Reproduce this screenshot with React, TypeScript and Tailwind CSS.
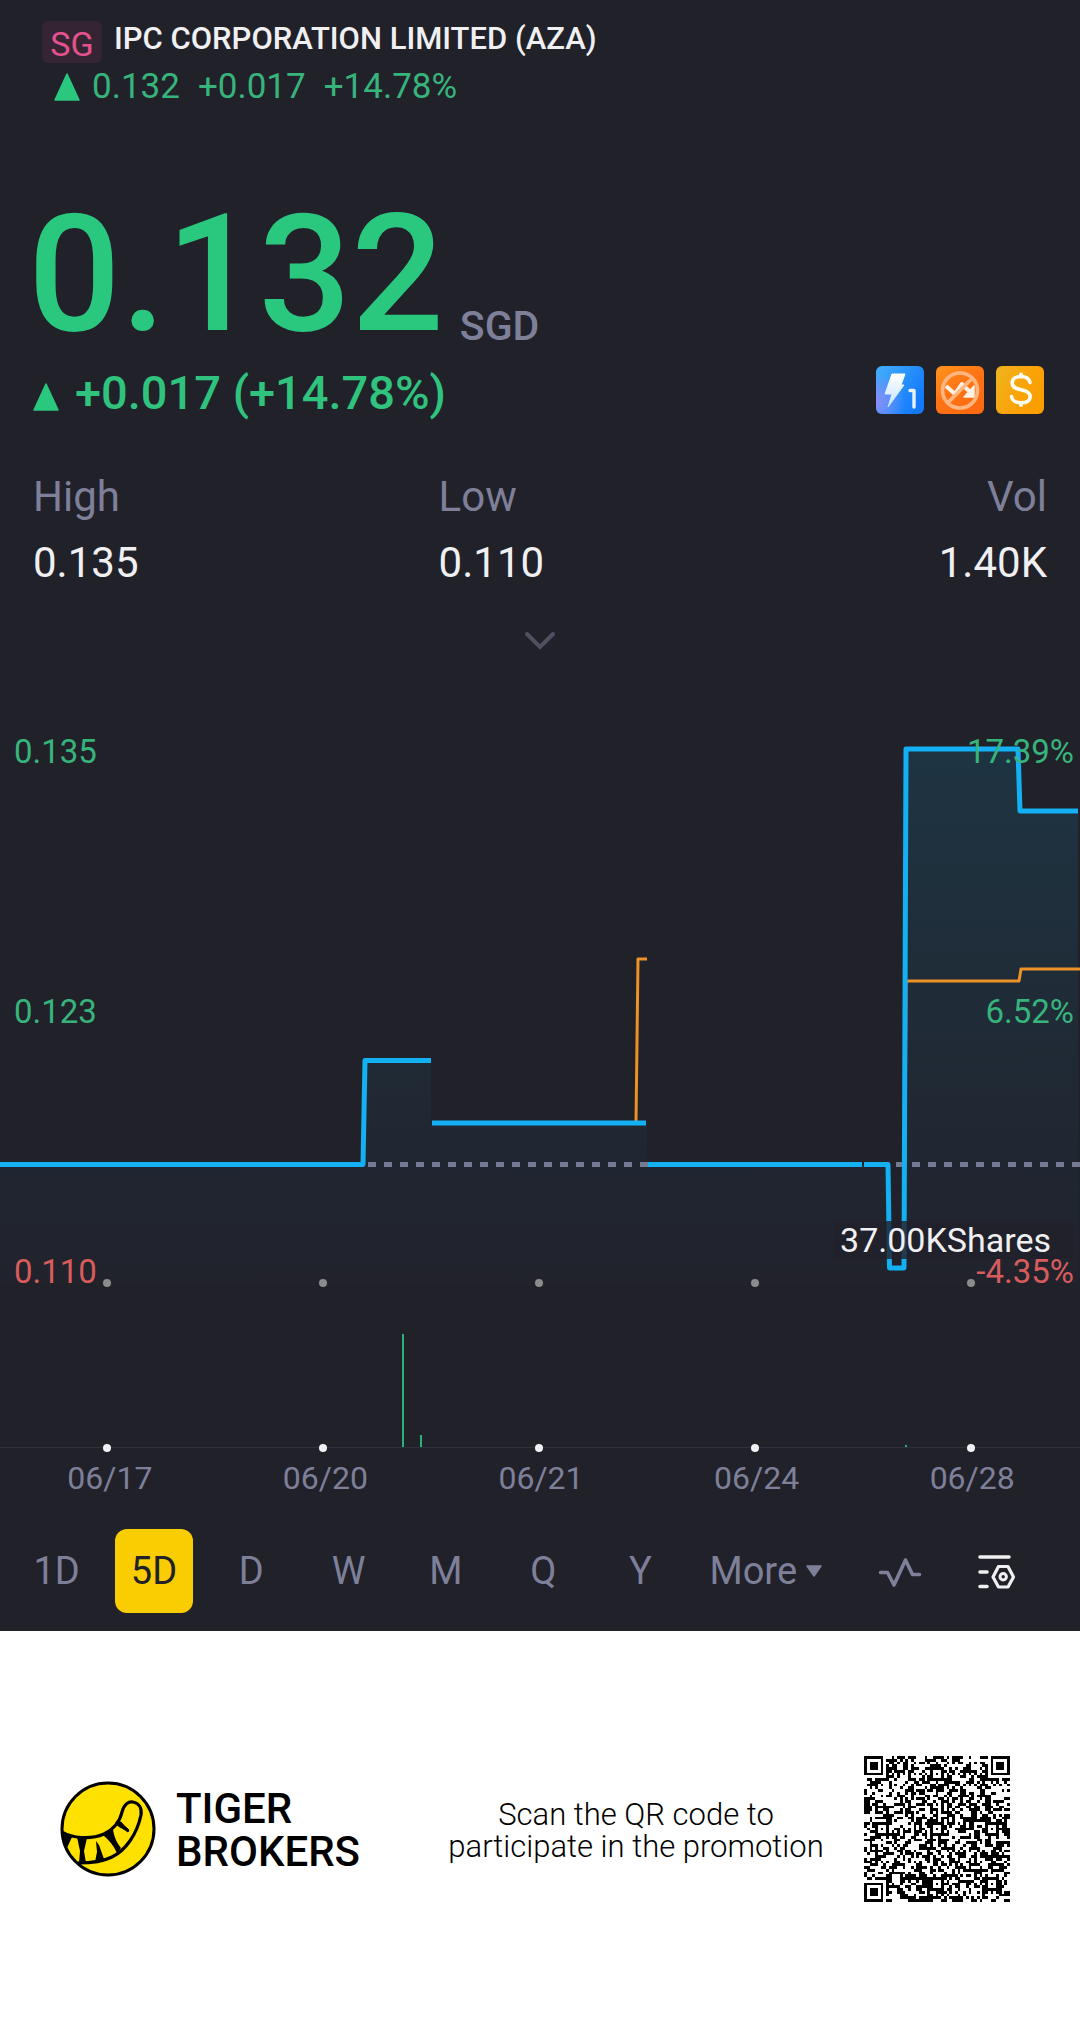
import React, { useState } from 'react';

const PERIODS = ['1D', '5D', 'D', 'W', 'M', 'Q', 'Y'];
const DATES = ['06/17', '06/20', '06/21', '06/24', '06/28'];
const DOTS = [107, 323, 539, 755, 971];

const STATS = [
    { label: 'High', value: '0.135', align: 'text-left' },
    { label: 'Low', value: '0.110', align: 'text-left' },
    { label: 'Vol', value: '1.40K', align: 'text-right' },
];

const UpTriangle: React.FC = () => (
    <svg viewBox="0 0 26 28" className="w-[26px] h-7 shrink-0" aria-hidden="true">
        <path d="M13 1 L25 27 H1 Z" fill="#2ac77f" stroke="#2ac77f" strokeWidth="1.5" strokeLinejoin="round" />
    </svg>
);

const QuoteLevelIcon: React.FC = () => (
    <svg viewBox="0 0 48 48" className="w-12 h-12" role="img" aria-label="Level 1 quotes">
        <defs>
            <linearGradient id="levelBg" x1="0" y1="0" x2="1" y2="0.6">
                <stop offset="0" stopColor="#45b0fb" />
                <stop offset="1" stopColor="#1279fb" />
            </linearGradient>
            <radialGradient id="levelGlow" cx="0" cy="0.75" r="0.6">
                <stop offset="0" stopColor="#8c8cf8" />
                <stop offset="1" stopColor="#8c8cf8" stopOpacity="0" />
            </radialGradient>
            <linearGradient id="boltFill" x1="0" y1="0" x2="0" y2="1">
                <stop offset="0" stopColor="#ffffff" />
                <stop offset="1" stopColor="#c3e2ff" />
            </linearGradient>
        </defs>
        <rect width="48" height="48" rx="6" fill="url(#levelBg)" />
        <rect width="48" height="48" rx="6" fill="url(#levelGlow)" />
        <path d="M16 8 H29 L25 19 H28 L12 41 L16 28 H9 Z" fill="url(#boltFill)" stroke="url(#boltFill)" strokeWidth="1" strokeLinejoin="round" />
        <path d="M34 24.5 H38 V41" fill="none" stroke="#e6f2ff" strokeWidth="3.4" strokeLinecap="round" strokeLinejoin="round" />
    </svg>
);

const NoShortIcon: React.FC = () => (
    <svg viewBox="0 0 48 48" className="w-12 h-12" role="img" aria-label="Short selling unavailable">
        <defs>
            <linearGradient id="shortBg" x1="0" y1="0" x2="0.7" y2="1">
                <stop offset="0" stopColor="#ff961c" />
                <stop offset="0.5" stopColor="#ff7414" />
                <stop offset="1" stopColor="#ff6a10" />
            </linearGradient>
        </defs>
        <rect width="48" height="48" rx="6" fill="url(#shortBg)" />
        <path d="M10 20 L19 28 L26 18 L34 26" fill="none" stroke="#fff1e4" strokeWidth="4" strokeLinejoin="round" />
        <path d="M38 20 V31 H28 Z" fill="#fff1e4" stroke="#fff1e4" strokeWidth="1.5" strokeLinejoin="round" />
        <circle cx="24" cy="24.5" r="17.5" fill="none" stroke="#ffb681" strokeWidth="3.6" />
        <path d="M12 36.5 L36 12.5" stroke="#ffb681" strokeWidth="3.6" />
    </svg>
);

const DollarIcon: React.FC = () => (
    <svg viewBox="0 0 48 48" className="w-12 h-12" role="img" aria-label="Financing">
        <defs>
            <linearGradient id="dollarBg" x1="0" y1="0" x2="1" y2="0.5">
                <stop offset="0" stopColor="#eeb620" />
                <stop offset="0.5" stopColor="#f8a60c" />
                <stop offset="1" stopColor="#fb9e02" />
            </linearGradient>
        </defs>
        <rect width="48" height="48" rx="6" fill="url(#dollarBg)" />
        <path
            d="M34 16.5 C33 12.5 29.5 10.5 25 10.5 C19.5 10.5 16.2 13 16.2 17 C16.2 21.5 20 22.7 25 23.7 C30.5 24.8 34.2 26.5 34.2 30.5 C34.2 34.5 30.5 36.8 25 36.8 C19.5 36.8 16 34.2 15.5 30.5"
            fill="none"
            stroke="#fffdf2"
            strokeWidth="3.6"
            strokeLinecap="round"
        />
        <path d="M25 8.5 V10.5 M25 37 V39" stroke="#fffdf2" strokeWidth="4" strokeLinecap="round" />
    </svg>
);

const PulseIcon: React.FC = () => (
    <svg viewBox="0 0 44 32" className="w-11 h-8" aria-hidden="true">
        <path d="M2.5 16.5 H9.5 L16 29 L27.5 4 L34.5 18.5 H41.5" fill="none" stroke="#7e8099" strokeWidth="3.6" strokeLinecap="round" strokeLinejoin="round" />
    </svg>
);

const ChartSettingsIcon: React.FC = () => (
    <svg viewBox="0 0 40 36" className="w-10 h-9" fill="none" stroke="#f0f0f2" strokeWidth="3.6" strokeLinecap="round" strokeLinejoin="round" aria-hidden="true">
        <path d="M3 3 H32 M3 18 H10 M3 32.5 H10" />
        <path d="M21.5 12.5 H31 L36.5 23 L31 33 H21.5 L16 23 Z" strokeWidth="3.2" />
        <circle cx="26.2" cy="22.8" r="3.2" strokeWidth="3" />
    </svg>
);

const TigerLogo: React.FC = () => (
    <svg viewBox="0 0 96 96" className="w-24 h-24 shrink-0" role="img" aria-label="Tiger Brokers logo">
        <circle cx="48" cy="48" r="46" fill="#ffe100" />
        <path
            d="M2 51 C12 57 30 59 44 53 C54 48 60 40 62 31 C64 23 69 20 73 21 C79 22 82 27 81 34 C77 53 66 69 52 76 C42 81 28 82 18 82"
            fill="none"
            stroke="#000"
            strokeWidth="3.2"
        />
        <path d="M1 50 L12 56 L7 67 Z" />
        <path d="M17 56 L27 57 L24 70 L26 82 L19 82 L20 70 Z" />
        <path d="M36 60 L39 64 L44 78 L35 81 L37 71 Z" />
        <path d="M43 54 L53 48 C54 56 57 62 61 67 L57 72 C54 65 49 59 43 54 Z" />
        <path d="M56 41 L61 41 C63 44 66 46 69 49 L68 51 C64 48 61 47 57 44 Z" stroke="#000" strokeWidth="1" />
        <circle cx="48" cy="48" r="46" fill="none" stroke="#000" strokeWidth="3" />
    </svg>
);

const QR_SIZE = 53;
const QR_ALIGN = [6, 26, 46];

// fixed seed so that the code looks the same on every render
const buildQrPath = () => {
    let seed = 20240628;
    const next = () => {
        seed = (seed * 1103515245 + 12345) % 2147483648;
        return seed / 2147483648;
    };
    const finderCell = (r: number, c: number) => {
        if (r < -1 || c < -1 || r > 7 || c > 7) return null;
        const d = Math.max(Math.abs(r - 3), Math.abs(c - 3));
        return d === 3 || d <= 1;
    };
    const cell = (r: number, c: number) => {
        const noise = next() > 0.5;
        const corner = finderCell(r, c) ?? finderCell(r, c - (QR_SIZE - 7)) ?? finderCell(r - (QR_SIZE - 7), c);
        if (corner !== null) return corner;
        for (const ar of QR_ALIGN) {
            for (const ac of QR_ALIGN) {
                const d = Math.max(Math.abs(r - ar), Math.abs(c - ac));
                if (d <= 2) return d !== 1;
            }
        }
        if (r === 6 || c === 6) return (r + c) % 2 === 0;
        return noise;
    };
    let d = '';
    for (let r = 0; r < QR_SIZE; r++) {
        for (let c = 0; c < QR_SIZE; c++) {
            if (cell(r, c)) d += `M${c} ${r}h1v1h-1z`;
        }
    }
    return d;
};

const QrCode: React.FC = () => (
    <svg viewBox="0 0 53 53" className="w-[146px] h-[146px] shrink-0" shapeRendering="crispEdges" role="img" aria-label="QR code">
        <path d={buildQrPath()} fill="#000" />
    </svg>
);

const PriceChart: React.FC = () => (
    <div className="relative">
        <svg viewBox="0 0 1080 766" preserveAspectRatio="none" className="block w-full h-[766px]" role="img" aria-label="5 day price and volume">
            <defs>
                <linearGradient id="area" gradientUnits="userSpaceOnUse" x1="0" y1="58" x2="0" y2="592">
                    <stop offset="0" stopColor="#0cb4e4" stopOpacity="0.13" />
                    <stop offset="1" stopColor="#0cb4e4" stopOpacity="0.01" />
                </linearGradient>
            </defs>
            <path
                d="M0 473 H363 L365 369 H431 V432 H647 V473 H888 L889 577 H904 L906 58 H1018 L1020 120 H1078 V592 H0 Z"
                fill="url(#area)"
            />
            <path d="M0 473.5 H1080" stroke="#757a93" strokeWidth="5" strokeDasharray="8 8" />
            <g fill="none" stroke="#ec9226" strokeWidth="3" strokeLinejoin="round">
                <path d="M636 432 L638 268 H647" />
                <path d="M905 473 L906 290 H1019 L1021 278 H1080" />
            </g>
            <g fill="none" stroke="#14b0f4" strokeWidth="5" strokeLinejoin="round">
                <path d="M0 473.5 H363 L365 369.5 H431" />
                <path d="M432 432 H646" />
                <path d="M648 473.5 H862" />
                <path d="M864 473.5 H888 L889.5 577 H904 L906 58 H1018 L1020 120 H1078" />
            </g>
            {DOTS.map(x => <circle key={x} cx={x} cy="592" r="4" fill="#8c8c8c" />)}
            <path d="M0 756.5 H1080" stroke="#2f303b" strokeWidth="1" />
            <g fill="#2fb079">
                <rect x="402" y="643" width="2" height="113" />
                <rect x="420" y="744" width="2" height="12" />
                <rect x="905" y="754" width="2" height="2" />
            </g>
            {DOTS.map(x => <circle key={x} cx={x} cy="757" r="4" fill="#f0f0f2" />)}
        </svg>

        {/* axis labels over the plot */}
        <div className="absolute inset-x-0 top-[41px] pl-[14px] pr-[6px] flex justify-between text-[33px] leading-[40px] text-[#37b47c]">
            <span>0.135</span><span>17.39%</span>
        </div>
        <div className="absolute inset-x-0 top-[301px] pl-[14px] pr-[6px] flex justify-between text-[33px] leading-[40px] text-[#37b47c]">
            <span>0.123</span><span>6.52%</span>
        </div>
        <div className="absolute right-[7px] top-[530px] pl-[6px] pr-[22px] bg-[#20212a]/80 text-[34px] leading-[38px] text-[#f0f0f2]">37.00KShares</div>
        <div className="absolute inset-x-0 top-[561px] pl-[14px] pr-[6px] flex justify-between text-[33px] leading-[40px] text-[#d85c5c]">
            <span>0.110</span><span>-4.35%</span>
        </div>
    </div>
);

const App: React.FC = () => {
    const [period, setPeriod] = useState('5D');

    return (
        <div className="min-h-screen bg-white font-['Roboto',sans-serif]">
            <main className="bg-[#21212a] pb-[18px]">
                <header className="pt-[21px] pl-[42px]">
                    <div className="flex items-start gap-3">
                        <span className="w-[60px] h-[42px] rounded-md bg-[#352533] text-[#e3528f] text-[34px] leading-[46px] text-center">SG</span>
                        <h1 className="text-[31px] leading-9 font-medium text-[#f0f0f2]">IPC CORPORATION LIMITED (AZA)</h1>
                    </div>
                    <div className="flex items-center pl-3 h-12 text-[35px] text-[#37b47c]">
                        <UpTriangle />
                        <span className="ml-3">0.132</span>
                        <span className="ml-[18px]">+0.017</span>
                        <span className="ml-[18px]">+14.78%</span>
                    </div>
                </header>

                <div className="px-7 pt-[79px] flex items-end gap-4 text-[#2ac77f]">
                    <span className="text-[163px] leading-[170px] font-medium">0.132</span>
                    <span className="text-[41px] leading-[48px] pb-[10px] text-[#7e8099] font-medium">SGD</span>
                </div>
                <section className="px-[33px]">
                    <div className="flex items-end h-[54px]">
                        <div className="flex items-end h-[42px]">
                            <div className="pb-[3px]"><UpTriangle /></div>
                            <span className="ml-4 text-[47px] leading-[42px] font-medium text-[#2fc37e]">+0.017 (+14.78%)</span>
                        </div>
                        <div className="ml-auto mr-[3px] flex gap-3">
                            <QuoteLevelIcon />
                            <NoShortIcon />
                            <DollarIcon />
                        </div>
                    </div>
                    <dl className="mt-[55px] grid grid-cols-[40%_1fr_auto] text-[42px] leading-[56px]">
                        {STATS.map(s => (
                            <div key={s.label} className={s.align}>
                                <dt className="text-[#7e8099]">{s.label}</dt>
                                <dd className="mt-[10px] text-[#f0f0f2]">{s.value}</dd>
                            </div>
                        ))}
                    </dl>
                    <button type="button" aria-label="Show more" className="flex w-full h-[100px] items-center justify-center">
                        <svg viewBox="0 0 32 20" className="w-8 h-5" aria-hidden="true">
                            <path d="M3 3 L16 16 L29 3" fill="none" stroke="#4f5160" strokeWidth="4" strokeLinecap="round" />
                        </svg>
                    </button>
                </section>

                <PriceChart />
                <div className="grid grid-cols-5 pl-[2px] text-center text-[32px] leading-[42px] text-[#7e8099]">
                    {DATES.map(d => <span key={d}>{d}</span>)}
                </div>

                <nav className="mt-[30px] pl-2 pr-[34px] grid grid-cols-[repeat(7,9fr)_15fr_9fr_9fr] items-center text-[38px] text-[#7e8099]">
                    {PERIODS.map(p => (
                        <button
                            key={p}
                            type="button"
                            onClick={() => setPeriod(p)}
                            className={`justify-self-center w-[78px] h-[84px] rounded-xl ${period === p ? 'bg-[#f9cd02] text-[#21212a]' : ''}`}
                        >
                            {p}
                        </button>
                    ))}
                    <button type="button" className="flex items-center justify-center gap-2 pr-2">
                        More
                        <svg viewBox="0 0 18 12" className="w-[18px] h-3" aria-hidden="true">
                            <path d="M2 1 H16 L9 11 Z" fill="#7e8099" stroke="#7e8099" strokeWidth="1.5" strokeLinejoin="round" />
                        </svg>
                    </button>
                    <button type="button" aria-label="Indicators" className="flex justify-center pt-[2px]"><PulseIcon /></button>
                    <button type="button" aria-label="Chart settings" className="flex justify-center pt-[2px]"><ChartSettingsIcon /></button>
                </nav>
            </main>

            <footer className="flex items-center pl-[60px] pr-[70px] py-[125px] text-black">
                <TigerLogo />
                <p className="ml-[20px] pt-[2px] text-[42px] leading-[43px] font-medium">TIGER<br />BROKERS</p>
                <p className="flex-1 pl-[48px] pt-1 text-center text-[31px] leading-8 font-light">
                    Scan the QR code to<br />participate in the promotion
                </p>
                <QrCode />
            </footer>
        </div>
    );
};

export default App;
